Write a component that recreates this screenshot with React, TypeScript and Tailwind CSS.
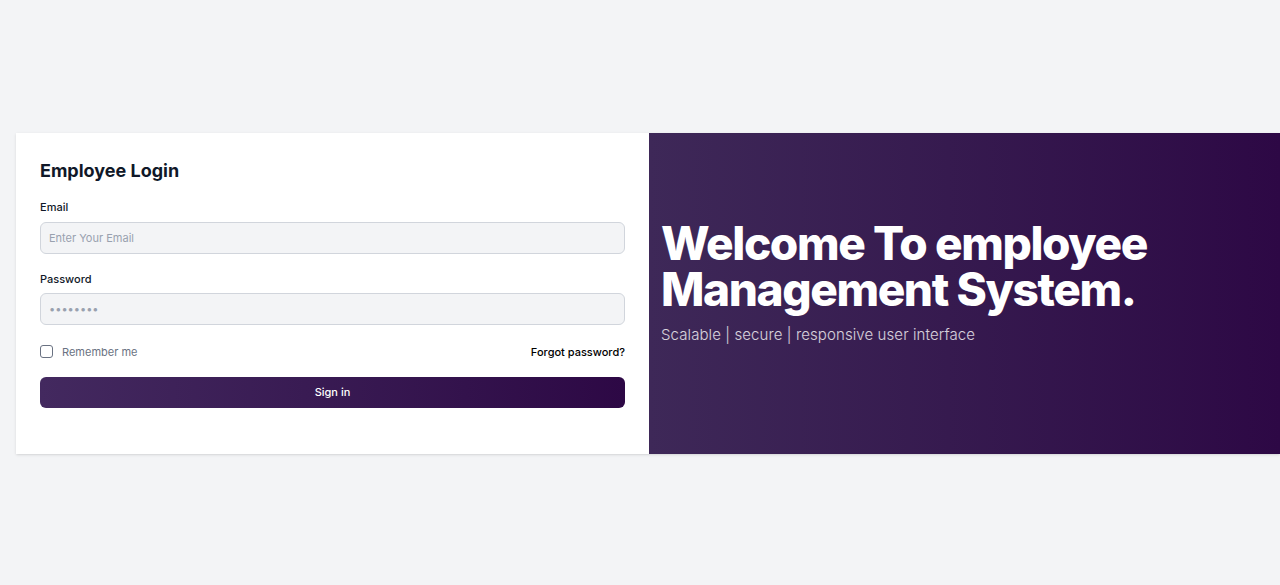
export default function App() {
  return (
    <div
      className="min-h-screen bg-gray-100 flex items-center pl-4"
      style={{ fontFamily: 'Inter, "Noto Sans", sans-serif' }}
    >
      <div className="flex w-full h-[321px] mt-[1px] shadow-sm">
        {/* login form */}
        <div className="w-[633px] bg-white px-6 pt-6">
          <h1 className="text-lg font-bold text-gray-900">Employee Login</h1>
          <form className="mt-[14px]" onSubmit={(e) => e.preventDefault()}>
            <label className="block text-[11px] font-medium text-gray-900">Email</label>
            <input
              type="email"
              placeholder="Enter Your Email"
              className="mt-[7px] w-full h-8 px-2 rounded-md border border-gray-300 bg-gray-100 text-[11px] placeholder:text-gray-400 outline-none"
            />
            <label className="block mt-[17px] text-[11px] font-medium text-gray-900">Password</label>
            <input
              type="password"
              defaultValue="password"
              className="mt-[5px] w-full h-8 px-2 rounded-md border border-gray-300 bg-gray-100 text-[11px] text-gray-400 outline-none"
            />
            <div className="mt-[19px] flex items-center justify-between">
              <label className="flex items-center gap-[9px] text-[11px] text-gray-500">
                <input
                  type="checkbox"
                  className="appearance-none w-[13px] h-[13px] rounded-[3px] border border-gray-500 bg-white"
                />
                Remember me
              </label>
              <a className="text-[11px] font-medium text-black">Forgot password?</a>
            </div>
            <button
              type="submit"
              className="mt-[17px] w-full h-[31px] rounded-md bg-gradient-to-r from-[#43295f] to-[#2d0845] text-white text-[11px] font-medium"
            >
              Sign in
            </button>
          </form>
        </div>

        {/* welcome panel */}
        <div className="flex-1 bg-gradient-to-r from-[#3e2858] to-[#2d0845] flex flex-col justify-center px-3 pb-[20px]">
          <h2 className="text-[46px] font-extrabold text-white leading-[46px] tracking-[-1.4px]">
            Welcome To employee
            <br />
            Management System.
          </h2>
          <p className="mt-[12px] text-[15px] font-light text-white/80 tracking-[0.1px]">
            Scalable | secure | responsive user interface
          </p>
        </div>
      </div>
    </div>
  );
}
